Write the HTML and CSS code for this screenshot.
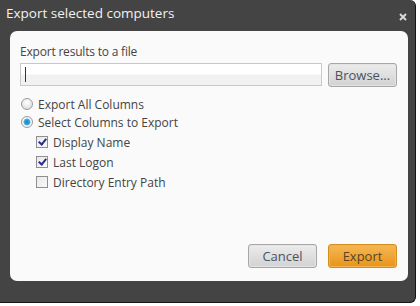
FILE: index.html
```html
<!DOCTYPE html>
<html lang="en">
<head>
  <meta charset="UTF-8" />
  <title>Export selected computers</title>
  <link rel="stylesheet" href="styles.css">
</head>
<body>
  <div class="dialog">
    <div class="titlebar">
      <span class="title">Export selected computers</span>
      <svg class="close" viewBox="0 0 10 10">
        <path d="M2 2 L8 8 M8 2 L2 8"/>
      </svg>
    </div>

    <div class="panel">
      <div class="label">Export results to a file</div>
      <div class="file-row">
        <div class="file-input"><span class="caret"></span></div>
        <button class="btn">Browse...</button>
      </div>

      <div class="options">
        <label class="radio-row"><span class="radio"></span>Export All Columns</label>
        <label class="radio-row"><span class="radio on"></span>Select Columns to Export</label>
        <div class="columns">
          <label class="check-row"><span class="check on"></span>Display Name</label>
          <label class="check-row"><span class="check on"></span>Last Logon</label>
          <label class="check-row"><span class="check"></span>Directory Entry Path</label>
        </div>
      </div>

      <div class="actions">
        <button class="btn">Cancel</button>
        <button class="btn primary">Export</button>
      </div>
    </div>
  </div>
</body>
</html>
```

FILE: styles.css
```css
* {
  box-sizing: border-box;
  margin: 0;
  padding: 0;
  font-family: 'Open Sans', 'Noto Sans', sans-serif;
}
body {
  background: #ffffff;
}
.dialog {
  width: 416px;
  height: 303px;
  background: #444444;
  border-right: 1px solid #151515;
  border-bottom: 1px solid #151515;
  border-radius: 0 6px 6px 0;
  display: flex;
  flex-direction: column;
}
.titlebar {
  height: 31px;
  padding: 0 7px 6px 6px;
  display: flex;
  align-items: center;
  justify-content: space-between;
}
.title {
  color: #f2f2f2;
  font-size: 13.5px;
}
.close {
  width: 10px;
  height: 10px;
  stroke: #d8d8d8;
  stroke-width: 2;
  margin-top: 8px;
}
.panel {
  margin: 0 7px 0 10px;
  height: 250px;
  background: #fafafa;
  border-radius: 7px;
  padding: 12px 10px 12px 10px;
  display: flex;
  flex-direction: column;
  color: #444;
  font-size: 12px;
}
.label {
  height: 20px;
  line-height: 18px;
  letter-spacing: -0.2px;
}
.file-row {
  display: flex;
  gap: 6px;
  height: 24px;
}
.file-input {
  width: 302px;
  height: 23px;
  border: 1px solid #c9c9c9;
  background: linear-gradient(#ffffff 45%, #f1f1f1 55%);
  display: flex;
  align-items: center;
  padding-left: 4px;
}
.caret {
  width: 1px;
  height: 15px;
  background: #333;
}
.btn {
  width: 69px;
  height: 24px;
  border: 1px solid #a6a6a6;
  border-radius: 3px;
  background: linear-gradient(#ececec, #d2d2d2);
  box-shadow: inset 0 0 0 1px #e4e4e4;
  color: #4a5262;
  font-size: 13px;
}
.btn.primary {
  border-color: #d58d20;
  background: linear-gradient(#f5b855, #e8941a);
  box-shadow: inset 0 0 0 1px #f2b14a;
  color: #5b4424;
}
.options {
  margin-top: 8px;
  display: flex;
  flex-direction: column;
}
.radio-row, .check-row {
  display: flex;
  align-items: center;
  gap: 5px;
  height: 18px;
}
.radio {
  width: 12px;
  height: 12px;
  border-radius: 50%;
  border: 1px solid #9b9b9b;
  background: radial-gradient(circle at 50% 35%, #ffffff, #d6d6d6);
  margin-left: 1px;
}
.radio.on {
  background: radial-gradient(circle, #1e7fc4 0, #2f99d8 2px, #4db1e6 3px, #ffffff 4px, #e4e4e4 6px);
}
.columns {
  margin-top: 1px;
  padding-left: 16px;
  display: flex;
  flex-direction: column;
}
.check-row {
  height: 20px;
}
.check {
  width: 12px;
  height: 12px;
  border: 1px solid #8f8f8f;
  background: linear-gradient(135deg, #e8e8e8, #fafafa);
  position: relative;
}
.check.on::after {
  content: '';
  position: absolute;
  left: 3px;
  top: 0px;
  width: 3px;
  height: 6px;
  border: solid #252f8a;
  border-width: 0 2px 2px 0;
  transform: rotate(40deg);
}
.actions {
  margin-top: auto;
  display: flex;
  justify-content: flex-end;
  gap: 11px;
  padding-right: 1px;
  padding-bottom: 1px;
}
```
